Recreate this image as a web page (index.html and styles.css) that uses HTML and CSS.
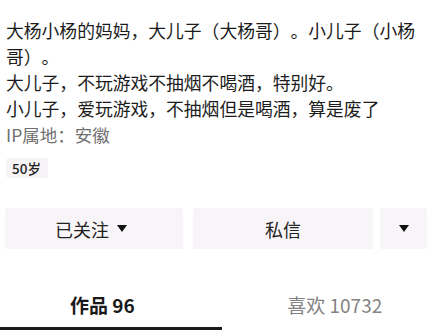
FILE: index.html
```html
<!DOCTYPE html>
<html lang="zh">
<head>
<meta charset="utf-8">
<link rel="stylesheet" href="styles.css">
</head>
<body>
<div class="profile">
  <div class="bio">
    <p class="bio-text">大杨小杨的妈妈，大儿子（大杨哥）。小儿子（小杨哥）。<br>大儿子，不玩游戏不抽烟不喝酒，特别好。<br>小儿子，爱玩游戏，不抽烟但是喝酒，算是废了</p>
    <p class="ip">IP属地：安徽</p>
    <div class="tags"><span class="tag">50岁</span></div>
  </div>
  <div class="actions">
    <div class="btn btn-follow">已关注<svg class="tri" viewBox="0 0 10 7"><path d="M0 0h10L5 7z"/></svg></div>
    <div class="btn btn-msg">私信</div>
    <div class="btn btn-more"><svg class="tri" viewBox="0 0 10 7"><path d="M0 0h10L5 7z"/></svg></div>
  </div>
  <div class="tabs">
    <div class="tab tab-active">作品 96</div>
    <div class="tab tab-likes">喜欢 10732</div>
  </div>
</div>
</body>
</html>
```

FILE: styles.css
```css
* { box-sizing: border-box; }
html, body { margin: 0; padding: 0; background: #fff; }
body {
  font-family: "Noto Sans CJK SC", "Noto Sans", sans-serif;
  color: #1c1c1c;
  width: 437px;
  height: 330px;
  overflow: hidden;
  text-spacing-trim: space-all;
}
.profile { display: flex; flex-direction: column; }
.bio { padding: 17px 4px 0 6px; }
.bio-text {
  margin: 0;
  font-size: 17.8px;
  line-height: 26px;
}
.ip {
  margin: 1px 0 0;
  font-size: 17.5px;
  line-height: 26px;
  color: #707070;
}
.tags { display: flex; margin-top: 10px; }
.tag {
  background: #f6f4f7;
  border-radius: 3px;
  font-size: 13.5px;
  font-weight: 500;
  line-height: 20px;
  padding: 0 7px 0 6px;
  color: #222;
}
.actions {
  display: flex;
  gap: 10px;
  padding: 30px 10px 0 5px;
}
.btn {
  height: 41px;
  background: #f8f5f8;
  border-radius: 2px;
  display: flex;
  align-items: center;
  justify-content: center;
  font-size: 18px;
  color: #222;
}
.btn-follow { width: 178px; gap: 8px; padding-right: 6px; }
.btn-msg { width: 180px; }
.btn-more { width: 47px; margin-left: -3px; }
.tri { width: 10px; height: 7px; fill: #111; display: block; }
.tabs {
  display: flex;
  margin-top: 42px;
}
.tab {
  flex: 1 1 0;
  text-align: center;
  font-size: 19px;
  line-height: 27px;
  padding-bottom: 9px;
  border-bottom: 3px solid transparent;
}
.tab-active {
  font-weight: 700;
  color: #1a1a1a;
  border-bottom-color: #1a1a1a;
  padding-right: 17px;
}
.tab-likes {
  color: #838383;
  padding-left: 11px;
}
```
